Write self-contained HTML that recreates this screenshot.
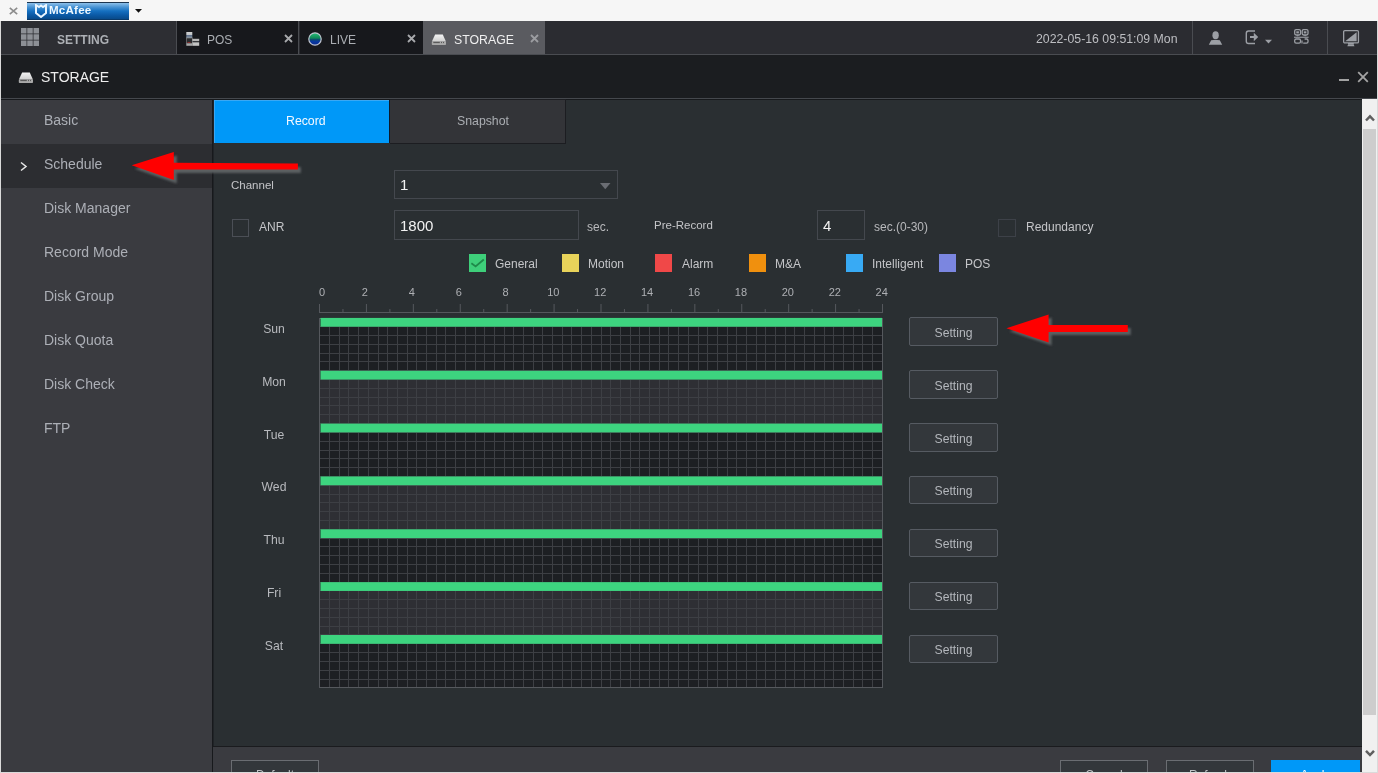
<!DOCTYPE html>
<html><head><meta charset="utf-8">
<style>
*{margin:0;padding:0;box-sizing:border-box}
html,body{width:1378px;height:773px;overflow:hidden;background:#f6f6f6;font-family:"Liberation Sans",sans-serif}
.a{position:absolute}
.t{position:absolute;white-space:nowrap;line-height:1;will-change:transform}
</style></head><body>
<!-- top strip -->
<div class="a" style="left:0;top:0;width:1378px;height:21px;background:#f6f6f6"></div>
<svg class="a" style="left:9px;top:7px" width="9" height="8"><path d="M0.8 0.8L8.2 7.2M8.2 0.8L0.8 7.2" stroke="#8c8c8c" stroke-width="1.6"/></svg>
<div class="a" style="left:27px;top:2px;width:102px;height:18px;background:linear-gradient(#8cc0ea 0%,#4a94d4 25%,#1570c0 50%,#0b5aa6 75%,#084a8a 100%);border-top:1px solid #1c3550;border-bottom:1px solid #0a3a6a"></div>
<div class="t" style="left:49px;top:4.2px;font-size:11.6px;font-weight:bold;letter-spacing:0.2px;color:#eef8ff">McAfee</div>
<svg class="a" style="left:35px;top:4px" width="12" height="14" viewBox="0 0 12 14"><path d="M1 1 L4 3 L6 1.5 L8 3 L11 1 L11 9 L6 13 L1 9Z" fill="none" stroke="#eaf6ff" stroke-width="2"/></svg>
<svg class="a" style="left:134.5px;top:9px" width="8" height="5"><path d="M0 0H7L3.5 3.8Z" fill="#111"/></svg>

<!-- tab bar -->
<div class="a" style="left:0;top:21px;width:1378px;height:34px;background:#2b2c31;border-bottom:1px solid #4a4c51"></div>
<div class="a" style="left:0;top:21px;width:1px;height:752px;background:#dadada"></div>
<div class="a" style="left:1377px;top:21px;width:1px;height:752px;background:#dadada"></div>
<div class="a" style="left:1px;top:21px;width:176px;height:33px;background:#2d2e33;border-right:1px solid #4a4c51"></div>
<svg class="a" style="left:21px;top:28.2px" width="18" height="18"><g fill="#8d9096"><rect x="0.00" y="0.00" width="5.5" height="5.5"/><rect x="6.25" y="0.00" width="5.5" height="5.5"/><rect x="12.50" y="0.00" width="5.5" height="5.5"/><rect x="0.00" y="6.25" width="5.5" height="5.5"/><rect x="6.25" y="6.25" width="5.5" height="5.5"/><rect x="12.50" y="6.25" width="5.5" height="5.5"/><rect x="0.00" y="12.50" width="5.5" height="5.5"/><rect x="6.25" y="12.50" width="5.5" height="5.5"/><rect x="12.50" y="12.50" width="5.5" height="5.5"/></g></svg>
<div class="t" style="left:57px;top:33.5px;font-size:12px;font-weight:bold;color:#adb0b5">SETTING</div>

<div class="a" style="left:177px;top:21px;width:122px;height:33px;background:#17181c;border-right:1px solid #4a4c51"></div>
<svg class="a" style="left:186px;top:32px" width="14" height="14"><defs><linearGradient id="pg" x1="0" y1="0" x2="0" y2="1"><stop offset="0" stop-color="#d0d0d0"/><stop offset="0.45" stop-color="#c0c4c8"/><stop offset="0.55" stop-color="#60708a"/><stop offset="1" stop-color="#8898a8"/></linearGradient></defs><rect x="0.3" y="0" width="6" height="6" fill="url(#pg)"/><rect x="0.3" y="6" width="6" height="5.5" fill="#2a2b2e" stroke="#8a8a8a" stroke-width="0.6"/><rect x="1.5" y="10" width="3" height="0.8" fill="#a03030"/><rect x="0.3" y="11.5" width="6" height="2.3" fill="#a8a8a8"/><rect x="6.3" y="6.8" width="6.9" height="2.4" fill="#b8b8b8"/><rect x="6.3" y="10.3" width="6.9" height="3.5" fill="#c4c4c4"/></svg>
<div class="t" style="left:207px;top:34px;font-size:12px;color:#abaeb3">POS</div>
<svg class="a" style="left:283.6px;top:34px" width="9" height="9"><path d="M1 1L8 8M8 1L1 8" stroke="#a8a9ac" stroke-width="1.8"/></svg>

<div class="a" style="left:300px;top:21px;width:123px;height:33px;background:#17181c"></div>
<svg class="a" style="left:308px;top:32px" width="14" height="14"><defs><linearGradient id="gl" x1="0" y1="0" x2="0" y2="1"><stop offset="0" stop-color="#28c078"/><stop offset="0.42" stop-color="#108a58"/><stop offset="0.55" stop-color="#0a4a70"/><stop offset="0.7" stop-color="#0838a0"/><stop offset="1" stop-color="#0a2a90"/></linearGradient></defs><circle cx="7" cy="7" r="6.2" fill="url(#gl)" stroke="#c0c4d0" stroke-width="1.2"/></svg>
<div class="t" style="left:330px;top:34px;font-size:12px;color:#abaeb3">LIVE</div>
<svg class="a" style="left:407px;top:34px" width="9" height="9"><path d="M1 1L8 8M8 1L1 8" stroke="#a8a9ac" stroke-width="1.8"/></svg>

<div class="a" style="left:423px;top:21px;width:122px;height:33px;background:#5a5b60"></div>
<svg class="a" style="left:431px;top:33.5px" width="16" height="12"><defs><linearGradient id="dg1" x1="0" y1="0" x2="0" y2="1"><stop offset="0" stop-color="#f4f4f4"/><stop offset="1" stop-color="#cfcfcf"/></linearGradient></defs><path d="M4.1 0.4H11.8L14.9 7.4H0.9Z" fill="url(#dg1)"/><rect x="0.8" y="7.2" width="14.2" height="3.8" rx="0.8" fill="#a9a9a9"/><rect x="2.3" y="7.9" width="6.5" height="1.2" fill="#5a5a5a"/><rect x="10" y="7.9" width="1" height="1.2" fill="#5a5a5a"/><rect x="12" y="7.9" width="1" height="1.2" fill="#5a5a5a"/></svg>
<div class="t" style="left:454px;top:34px;font-size:12.3px;color:#f0f0f0">STORAGE</div>
<svg class="a" style="left:530.2px;top:34px" width="9" height="9"><path d="M1 1L8 8M8 1L1 8" stroke="#9c9da1" stroke-width="1.8"/></svg>

<div class="t" style="left:1036px;top:33px;font-size:12.3px;color:#bdbec2">2022-05-16 09:51:09 Mon</div>
<div class="a" style="left:1192px;top:21px;width:1px;height:33px;background:#4a4c51"></div>
<div class="a" style="left:1327px;top:21px;width:1px;height:33px;background:#4a4c51"></div>
<svg class="a" style="left:1208px;top:31px" width="15" height="14"><ellipse cx="7.6" cy="4.2" rx="3.2" ry="3.9" fill="#9c9fa5"/><path d="M0.8 13.8 L3.2 9.2 Q7.5 8.2 11.8 9.2 L14.2 13.8Z" fill="#9c9fa5"/></svg>
<svg class="a" style="left:1245px;top:30px" width="28" height="15"><path d="M10 1H3.5Q1.3 1 1.3 3.2V11.3Q1.3 13.5 3.5 13.5H10" fill="none" stroke="#9c9fa5" stroke-width="1.4"/><path d="M5 5.9H8.8V2.8L13.2 7L8.8 11.2V8.1H5Z" fill="#9c9fa5"/><path d="M20 9.8H27L23.5 13.6Z" fill="#9c9fa5"/></svg>
<svg class="a" style="left:1294px;top:29px" width="15" height="15"><g fill="none" stroke="#9c9fa5" stroke-width="1.3"><rect x="0.7" y="0.7" width="5.8" height="5.3" rx="1.4"/><rect x="8.2" y="0.7" width="5.8" height="5.3" rx="1.4"/><rect x="0.7" y="10" width="5.8" height="4.2" rx="1.4"/><path d="M9.2 14.2H12.6Q14 14.2 14 12.8V11.4Q14 10 12.6 10H10.6"/></g><g fill="#9c9fa5"><rect x="2.3" y="2.3" width="2.6" height="2.1"/><rect x="9.8" y="2.3" width="2.6" height="2.1"/><path d="M2.5 6.2L3.6 7.4L4.7 6.2Z"/><path d="M10 6.2L11.1 7.4L12.2 6.2Z"/><rect x="0" y="7.7" width="14.6" height="1.1"/><rect x="7.4" y="11.5" width="1.2" height="3"/></g></svg>
<svg class="a" style="left:1343px;top:29.8px" width="17" height="17"><rect x="0.65" y="0.65" width="14.8" height="12.2" rx="1.2" fill="none" stroke="#9c9fa5" stroke-width="1.3"/><path d="M2.2 11.3L13.6 2.2V11.3Z" fill="#9c9fa5"/><rect x="5" y="13" width="5.8" height="1.6" fill="#9c9fa5"/><path d="M4.3 16.3L5.1 14.4H10.7L11.5 16.3Z" fill="#9c9fa5"/></svg>

<!-- header -->
<div class="a" style="left:1px;top:55px;width:1376px;height:43px;background:#1b1d20"></div><div class="a" style="left:1px;top:98px;width:1376px;height:1px;background:#45484d"></div><div class="a" style="left:1px;top:99px;width:1376px;height:1px;background:#17191c"></div>
<svg class="a" style="left:17.5px;top:71.5px" width="16" height="12"><defs><linearGradient id="dg2" x1="0" y1="0" x2="0" y2="1"><stop offset="0" stop-color="#f4f4f4"/><stop offset="1" stop-color="#cfcfcf"/></linearGradient></defs><path d="M4.1 0.4H11.8L14.9 7.4H0.9Z" fill="url(#dg2)"/><rect x="0.8" y="7.2" width="14.2" height="3.8" rx="0.8" fill="#a9a9a9"/><rect x="2.3" y="7.9" width="6.5" height="1.2" fill="#5a5a5a"/><rect x="10" y="7.9" width="1" height="1.2" fill="#5a5a5a"/><rect x="12" y="7.9" width="1" height="1.2" fill="#5a5a5a"/></svg>
<div class="t" style="left:41px;top:70px;font-size:14px;color:#eeeeee">STORAGE</div>
<div class="a" style="left:1338.5px;top:79px;width:10.5px;height:1.6px;background:#a2a2a2"></div>
<svg class="a" style="left:1356.5px;top:71px" width="12" height="12"><path d="M1.2 1.2L10.8 10.8M10.8 1.2L1.2 10.8" stroke="#a4a4a4" stroke-width="1.8"/></svg>

<!-- sidebar -->
<div class="a" style="left:1px;top:100px;width:212px;height:673px;background:#3a3b40;border-right:1px solid #17191c"></div><div class="a" style="left:213px;top:100px;width:1px;height:646px;background:#202327"></div>
<div class="a" style="left:1px;top:144px;width:211px;height:44px;background:#2c2d31"></div>
<div class="t" style="left:44px;top:113.4px;font-size:14px;color:#acafb6">Basic</div>
<svg class="a" style="left:19px;top:161px" width="10" height="11"><path d="M2 1.5L7 5.5L2 9.5" fill="none" stroke="#e8e8e8" stroke-width="1.5"/></svg>
<div class="t" style="left:44px;top:157.4px;font-size:14px;color:#acafb6">Schedule</div>
<div class="t" style="left:44px;top:201.4px;font-size:14px;color:#acafb6">Disk Manager</div>
<div class="t" style="left:44px;top:245.4px;font-size:14px;color:#acafb6">Record Mode</div>
<div class="t" style="left:44px;top:289.4px;font-size:14px;color:#acafb6">Disk Group</div>
<div class="t" style="left:44px;top:333.4px;font-size:14px;color:#acafb6">Disk Quota</div>
<div class="t" style="left:44px;top:377.4px;font-size:14px;color:#acafb6">Disk Check</div>
<div class="t" style="left:44px;top:421.4px;font-size:14px;color:#acafb6">FTP</div>

<!-- content -->
<div class="a" style="left:214px;top:100px;width:1148px;height:646px;background:#2a2f32"></div>
<div class="a" style="left:214px;top:100px;width:175px;height:43px;background:#0098f8;border-top:1px solid #3aa8f4;border-left:1px solid #3aa8f4"></div><div class="a" style="left:389px;top:100px;width:1px;height:43px;background:#0d1a2a"></div>
<div class="t" style="left:286px;top:114.8px;font-size:12.3px;color:#f4f8ff">Record</div>
<div class="a" style="left:390px;top:99px;width:176px;height:45px;background:#333438;border:1px solid #1c1d21;border-left:none"></div>
<div class="t" style="left:456.5px;top:114.8px;font-size:12.3px;color:#abaeb3">Snapshot</div>


<div class="t" style="left:231px;top:179.5px;font-size:11.5px;color:#c4c5c8">Channel</div>
<div class="a" style="left:394px;top:170px;width:224px;height:29px;border:1px solid #44484e"></div>
<div class="t" style="left:400px;top:177.2px;font-size:15px;color:#f2f2f2">1</div>
<svg class="a" style="left:600px;top:182.5px" width="11" height="7"><path d="M0 0H10.5L5.25 6.3Z" fill="#6a6d73"/></svg>

<div class="a" style="left:232px;top:219px;width:17px;height:18px;border:1px solid #4b4f56"></div>
<div class="t" style="left:259px;top:221px;font-size:12px;color:#c4c5c8">ANR</div>
<div class="a" style="left:394px;top:210px;width:185px;height:30px;border:1px solid #44484e"></div>
<div class="t" style="left:400px;top:218px;font-size:15px;color:#f2f2f2">1800</div>
<div class="t" style="left:587px;top:221px;font-size:12px;color:#b8b9bc">sec.</div>
<div class="t" style="left:654px;top:220px;font-size:11.5px;color:#c4c5c8">Pre-Record</div>
<div class="a" style="left:817px;top:210px;width:48px;height:30px;border:1px solid #44484e"></div>
<div class="t" style="left:823px;top:218px;font-size:15px;color:#f2f2f2">4</div>
<div class="t" style="left:874px;top:221px;font-size:12px;color:#b8b9bc">sec.(0-30)</div>
<div class="a" style="left:998px;top:219px;width:18px;height:18px;border:1px solid #3d4148"></div>
<div class="t" style="left:1026px;top:221px;font-size:12px;color:#c4c5c8">Redundancy</div>
<div class="a" style="left:469px;top:254px;width:17px;height:18px;background:#3ecf7a"></div>
<div class="t" style="left:495px;top:257.6px;font-size:12px;color:#c4c5c8">General</div>
<div class="a" style="left:562px;top:254px;width:17px;height:18px;background:#e8d35a"></div>
<div class="t" style="left:588px;top:257.6px;font-size:12px;color:#c4c5c8">Motion</div>
<div class="a" style="left:655px;top:254px;width:17px;height:18px;background:#f04848"></div>
<div class="t" style="left:682px;top:257.6px;font-size:12px;color:#c4c5c8">Alarm</div>
<div class="a" style="left:749px;top:254px;width:17px;height:18px;background:#f0900e"></div>
<div class="t" style="left:775px;top:257.6px;font-size:12px;color:#c4c5c8">M&amp;A</div>
<div class="a" style="left:846px;top:254px;width:17px;height:18px;background:#38aaf4"></div>
<div class="t" style="left:872px;top:257.6px;font-size:12px;color:#c4c5c8">Intelligent</div>
<div class="a" style="left:939px;top:254px;width:17px;height:18px;background:#7b86e0"></div>
<div class="t" style="left:965px;top:257.6px;font-size:12px;color:#c4c5c8">POS</div>
<svg class="a" style="left:469px;top:254px" width="17" height="18"><path d="M2.4 9.3L6.6 12.4L14.8 5.6" fill="none" stroke="#1f8a4a" stroke-width="1.9"/></svg>

<svg class="a" style="left:300px;top:280px;will-change:transform" width="600" height="420" viewBox="0 0 600 420">
<rect x="19.00" y="24" width="1" height="9" fill="#55585d"/>
<rect x="42.46" y="29" width="1" height="4" fill="#55585d"/>
<rect x="65.92" y="24" width="1" height="9" fill="#55585d"/>
<rect x="89.38" y="29" width="1" height="4" fill="#55585d"/>
<rect x="112.83" y="24" width="1" height="9" fill="#55585d"/>
<rect x="136.29" y="29" width="1" height="4" fill="#55585d"/>
<rect x="159.75" y="24" width="1" height="9" fill="#55585d"/>
<rect x="183.21" y="29" width="1" height="4" fill="#55585d"/>
<rect x="206.67" y="24" width="1" height="9" fill="#55585d"/>
<rect x="230.12" y="29" width="1" height="4" fill="#55585d"/>
<rect x="253.58" y="24" width="1" height="9" fill="#55585d"/>
<rect x="277.04" y="29" width="1" height="4" fill="#55585d"/>
<rect x="300.50" y="24" width="1" height="9" fill="#55585d"/>
<rect x="323.96" y="29" width="1" height="4" fill="#55585d"/>
<rect x="347.42" y="24" width="1" height="9" fill="#55585d"/>
<rect x="370.88" y="29" width="1" height="4" fill="#55585d"/>
<rect x="394.33" y="24" width="1" height="9" fill="#55585d"/>
<rect x="417.79" y="29" width="1" height="4" fill="#55585d"/>
<rect x="441.25" y="24" width="1" height="9" fill="#55585d"/>
<rect x="464.71" y="29" width="1" height="4" fill="#55585d"/>
<rect x="488.17" y="24" width="1" height="9" fill="#55585d"/>
<rect x="511.62" y="29" width="1" height="4" fill="#55585d"/>
<rect x="535.08" y="24" width="1" height="9" fill="#55585d"/>
<rect x="558.54" y="29" width="1" height="4" fill="#55585d"/>
<rect x="582.00" y="24" width="1" height="9" fill="#55585d"/>
<rect x="19.00" y="32" width="564.00" height="1" fill="#55585d"/>
<text x="22.00" y="16" text-anchor="middle" font-family="Liberation Sans" font-size="11" fill="#aeb0b4">0</text>
<text x="64.92" y="16" text-anchor="middle" font-family="Liberation Sans" font-size="11" fill="#aeb0b4">2</text>
<text x="111.83" y="16" text-anchor="middle" font-family="Liberation Sans" font-size="11" fill="#aeb0b4">4</text>
<text x="158.75" y="16" text-anchor="middle" font-family="Liberation Sans" font-size="11" fill="#aeb0b4">6</text>
<text x="205.67" y="16" text-anchor="middle" font-family="Liberation Sans" font-size="11" fill="#aeb0b4">8</text>
<text x="253.28" y="16" text-anchor="middle" font-family="Liberation Sans" font-size="11" fill="#aeb0b4">10</text>
<text x="300.20" y="16" text-anchor="middle" font-family="Liberation Sans" font-size="11" fill="#aeb0b4">12</text>
<text x="347.12" y="16" text-anchor="middle" font-family="Liberation Sans" font-size="11" fill="#aeb0b4">14</text>
<text x="394.03" y="16" text-anchor="middle" font-family="Liberation Sans" font-size="11" fill="#aeb0b4">16</text>
<text x="440.95" y="16" text-anchor="middle" font-family="Liberation Sans" font-size="11" fill="#aeb0b4">18</text>
<text x="487.87" y="16" text-anchor="middle" font-family="Liberation Sans" font-size="11" fill="#aeb0b4">20</text>
<text x="534.78" y="16" text-anchor="middle" font-family="Liberation Sans" font-size="11" fill="#aeb0b4">22</text>
<text x="581.70" y="16" text-anchor="middle" font-family="Liberation Sans" font-size="11" fill="#aeb0b4">24</text>
<rect x="19.50" y="37.90" width="563.00" height="52.85" fill="#1d1f23"/>
<rect x="19.50" y="90.75" width="563.00" height="52.85" fill="#2e2f34"/>
<rect x="19.50" y="143.60" width="563.00" height="52.85" fill="#1d1f23"/>
<rect x="19.50" y="196.45" width="563.00" height="52.85" fill="#2e2f34"/>
<rect x="19.50" y="249.30" width="563.00" height="52.85" fill="#1d1f23"/>
<rect x="19.50" y="302.15" width="563.00" height="52.85" fill="#2e2f34"/>
<rect x="19.50" y="355.00" width="563.00" height="52.85" fill="#1d1f23"/>
<rect x="29" y="37.90" width="1" height="369.95" fill="#3d3f44" shape-rendering="crispEdges"/>
<rect x="39" y="37.90" width="1" height="369.95" fill="#3d3f44" shape-rendering="crispEdges"/>
<rect x="48" y="37.90" width="1" height="369.95" fill="#3d3f44" shape-rendering="crispEdges"/>
<rect x="58" y="37.90" width="1" height="369.95" fill="#3d3f44" shape-rendering="crispEdges"/>
<rect x="68" y="37.90" width="1" height="369.95" fill="#3d3f44" shape-rendering="crispEdges"/>
<rect x="78" y="37.90" width="1" height="369.95" fill="#3d3f44" shape-rendering="crispEdges"/>
<rect x="87" y="37.90" width="1" height="369.95" fill="#3d3f44" shape-rendering="crispEdges"/>
<rect x="97" y="37.90" width="1" height="369.95" fill="#3d3f44" shape-rendering="crispEdges"/>
<rect x="107" y="37.90" width="1" height="369.95" fill="#3d3f44" shape-rendering="crispEdges"/>
<rect x="116" y="37.90" width="1" height="369.95" fill="#3d3f44" shape-rendering="crispEdges"/>
<rect x="126" y="37.90" width="1" height="369.95" fill="#3d3f44" shape-rendering="crispEdges"/>
<rect x="136" y="37.90" width="1" height="369.95" fill="#3d3f44" shape-rendering="crispEdges"/>
<rect x="145" y="37.90" width="1" height="369.95" fill="#3d3f44" shape-rendering="crispEdges"/>
<rect x="155" y="37.90" width="1" height="369.95" fill="#3d3f44" shape-rendering="crispEdges"/>
<rect x="165" y="37.90" width="1" height="369.95" fill="#3d3f44" shape-rendering="crispEdges"/>
<rect x="175" y="37.90" width="1" height="369.95" fill="#3d3f44" shape-rendering="crispEdges"/>
<rect x="184" y="37.90" width="1" height="369.95" fill="#3d3f44" shape-rendering="crispEdges"/>
<rect x="194" y="37.90" width="1" height="369.95" fill="#3d3f44" shape-rendering="crispEdges"/>
<rect x="204" y="37.90" width="1" height="369.95" fill="#3d3f44" shape-rendering="crispEdges"/>
<rect x="213" y="37.90" width="1" height="369.95" fill="#3d3f44" shape-rendering="crispEdges"/>
<rect x="223" y="37.90" width="1" height="369.95" fill="#3d3f44" shape-rendering="crispEdges"/>
<rect x="233" y="37.90" width="1" height="369.95" fill="#3d3f44" shape-rendering="crispEdges"/>
<rect x="242" y="37.90" width="1" height="369.95" fill="#3d3f44" shape-rendering="crispEdges"/>
<rect x="252" y="37.90" width="1" height="369.95" fill="#3d3f44" shape-rendering="crispEdges"/>
<rect x="262" y="37.90" width="1" height="369.95" fill="#3d3f44" shape-rendering="crispEdges"/>
<rect x="271" y="37.90" width="1" height="369.95" fill="#3d3f44" shape-rendering="crispEdges"/>
<rect x="281" y="37.90" width="1" height="369.95" fill="#3d3f44" shape-rendering="crispEdges"/>
<rect x="291" y="37.90" width="1" height="369.95" fill="#3d3f44" shape-rendering="crispEdges"/>
<rect x="301" y="37.90" width="1" height="369.95" fill="#3d3f44" shape-rendering="crispEdges"/>
<rect x="310" y="37.90" width="1" height="369.95" fill="#3d3f44" shape-rendering="crispEdges"/>
<rect x="320" y="37.90" width="1" height="369.95" fill="#3d3f44" shape-rendering="crispEdges"/>
<rect x="330" y="37.90" width="1" height="369.95" fill="#3d3f44" shape-rendering="crispEdges"/>
<rect x="339" y="37.90" width="1" height="369.95" fill="#3d3f44" shape-rendering="crispEdges"/>
<rect x="349" y="37.90" width="1" height="369.95" fill="#3d3f44" shape-rendering="crispEdges"/>
<rect x="359" y="37.90" width="1" height="369.95" fill="#3d3f44" shape-rendering="crispEdges"/>
<rect x="368" y="37.90" width="1" height="369.95" fill="#3d3f44" shape-rendering="crispEdges"/>
<rect x="378" y="37.90" width="1" height="369.95" fill="#3d3f44" shape-rendering="crispEdges"/>
<rect x="388" y="37.90" width="1" height="369.95" fill="#3d3f44" shape-rendering="crispEdges"/>
<rect x="398" y="37.90" width="1" height="369.95" fill="#3d3f44" shape-rendering="crispEdges"/>
<rect x="407" y="37.90" width="1" height="369.95" fill="#3d3f44" shape-rendering="crispEdges"/>
<rect x="417" y="37.90" width="1" height="369.95" fill="#3d3f44" shape-rendering="crispEdges"/>
<rect x="427" y="37.90" width="1" height="369.95" fill="#3d3f44" shape-rendering="crispEdges"/>
<rect x="436" y="37.90" width="1" height="369.95" fill="#3d3f44" shape-rendering="crispEdges"/>
<rect x="446" y="37.90" width="1" height="369.95" fill="#3d3f44" shape-rendering="crispEdges"/>
<rect x="456" y="37.90" width="1" height="369.95" fill="#3d3f44" shape-rendering="crispEdges"/>
<rect x="465" y="37.90" width="1" height="369.95" fill="#3d3f44" shape-rendering="crispEdges"/>
<rect x="475" y="37.90" width="1" height="369.95" fill="#3d3f44" shape-rendering="crispEdges"/>
<rect x="485" y="37.90" width="1" height="369.95" fill="#3d3f44" shape-rendering="crispEdges"/>
<rect x="494" y="37.90" width="1" height="369.95" fill="#3d3f44" shape-rendering="crispEdges"/>
<rect x="504" y="37.90" width="1" height="369.95" fill="#3d3f44" shape-rendering="crispEdges"/>
<rect x="514" y="37.90" width="1" height="369.95" fill="#3d3f44" shape-rendering="crispEdges"/>
<rect x="524" y="37.90" width="1" height="369.95" fill="#3d3f44" shape-rendering="crispEdges"/>
<rect x="533" y="37.90" width="1" height="369.95" fill="#3d3f44" shape-rendering="crispEdges"/>
<rect x="543" y="37.90" width="1" height="369.95" fill="#3d3f44" shape-rendering="crispEdges"/>
<rect x="553" y="37.90" width="1" height="369.95" fill="#3d3f44" shape-rendering="crispEdges"/>
<rect x="562" y="37.90" width="1" height="369.95" fill="#3d3f44" shape-rendering="crispEdges"/>
<rect x="572" y="37.90" width="1" height="369.95" fill="#3d3f44" shape-rendering="crispEdges"/>
<rect x="19.50" y="46" width="563.00" height="1" fill="#3d3f44" shape-rendering="crispEdges"/>
<rect x="19.50" y="55" width="563.00" height="1" fill="#3d3f44" shape-rendering="crispEdges"/>
<rect x="19.50" y="64" width="563.00" height="1" fill="#3d3f44" shape-rendering="crispEdges"/>
<rect x="19.50" y="73" width="563.00" height="1" fill="#3d3f44" shape-rendering="crispEdges"/>
<rect x="19.50" y="81" width="563.00" height="1" fill="#3d3f44" shape-rendering="crispEdges"/>
<rect x="19.50" y="90" width="563.00" height="1" fill="#3d3f44" shape-rendering="crispEdges"/>
<rect x="19.50" y="99" width="563.00" height="1" fill="#3d3f44" shape-rendering="crispEdges"/>
<rect x="19.50" y="108" width="563.00" height="1" fill="#3d3f44" shape-rendering="crispEdges"/>
<rect x="19.50" y="117" width="563.00" height="1" fill="#3d3f44" shape-rendering="crispEdges"/>
<rect x="19.50" y="125" width="563.00" height="1" fill="#3d3f44" shape-rendering="crispEdges"/>
<rect x="19.50" y="134" width="563.00" height="1" fill="#3d3f44" shape-rendering="crispEdges"/>
<rect x="19.50" y="143" width="563.00" height="1" fill="#3d3f44" shape-rendering="crispEdges"/>
<rect x="19.50" y="152" width="563.00" height="1" fill="#3d3f44" shape-rendering="crispEdges"/>
<rect x="19.50" y="161" width="563.00" height="1" fill="#3d3f44" shape-rendering="crispEdges"/>
<rect x="19.50" y="170" width="563.00" height="1" fill="#3d3f44" shape-rendering="crispEdges"/>
<rect x="19.50" y="178" width="563.00" height="1" fill="#3d3f44" shape-rendering="crispEdges"/>
<rect x="19.50" y="187" width="563.00" height="1" fill="#3d3f44" shape-rendering="crispEdges"/>
<rect x="19.50" y="196" width="563.00" height="1" fill="#3d3f44" shape-rendering="crispEdges"/>
<rect x="19.50" y="205" width="563.00" height="1" fill="#3d3f44" shape-rendering="crispEdges"/>
<rect x="19.50" y="214" width="563.00" height="1" fill="#3d3f44" shape-rendering="crispEdges"/>
<rect x="19.50" y="222" width="563.00" height="1" fill="#3d3f44" shape-rendering="crispEdges"/>
<rect x="19.50" y="231" width="563.00" height="1" fill="#3d3f44" shape-rendering="crispEdges"/>
<rect x="19.50" y="240" width="563.00" height="1" fill="#3d3f44" shape-rendering="crispEdges"/>
<rect x="19.50" y="249" width="563.00" height="1" fill="#3d3f44" shape-rendering="crispEdges"/>
<rect x="19.50" y="258" width="563.00" height="1" fill="#3d3f44" shape-rendering="crispEdges"/>
<rect x="19.50" y="266" width="563.00" height="1" fill="#3d3f44" shape-rendering="crispEdges"/>
<rect x="19.50" y="275" width="563.00" height="1" fill="#3d3f44" shape-rendering="crispEdges"/>
<rect x="19.50" y="284" width="563.00" height="1" fill="#3d3f44" shape-rendering="crispEdges"/>
<rect x="19.50" y="293" width="563.00" height="1" fill="#3d3f44" shape-rendering="crispEdges"/>
<rect x="19.50" y="302" width="563.00" height="1" fill="#3d3f44" shape-rendering="crispEdges"/>
<rect x="19.50" y="310" width="563.00" height="1" fill="#3d3f44" shape-rendering="crispEdges"/>
<rect x="19.50" y="319" width="563.00" height="1" fill="#3d3f44" shape-rendering="crispEdges"/>
<rect x="19.50" y="328" width="563.00" height="1" fill="#3d3f44" shape-rendering="crispEdges"/>
<rect x="19.50" y="337" width="563.00" height="1" fill="#3d3f44" shape-rendering="crispEdges"/>
<rect x="19.50" y="346" width="563.00" height="1" fill="#3d3f44" shape-rendering="crispEdges"/>
<rect x="19.50" y="354" width="563.00" height="1" fill="#3d3f44" shape-rendering="crispEdges"/>
<rect x="19.50" y="363" width="563.00" height="1" fill="#3d3f44" shape-rendering="crispEdges"/>
<rect x="19.50" y="372" width="563.00" height="1" fill="#3d3f44" shape-rendering="crispEdges"/>
<rect x="19.50" y="381" width="563.00" height="1" fill="#3d3f44" shape-rendering="crispEdges"/>
<rect x="19.50" y="390" width="563.00" height="1" fill="#3d3f44" shape-rendering="crispEdges"/>
<rect x="19.50" y="399" width="563.00" height="1" fill="#3d3f44" shape-rendering="crispEdges"/>
<rect x="19" y="38" width="563" height="369" fill="none" stroke="#55585d" stroke-width="1" transform="translate(0.5,0.5)"/>
<rect x="20.50" y="37.90" width="561.50" height="8.81" fill="#3dd47f"/>
<rect x="20.50" y="90.75" width="561.50" height="8.81" fill="#3dd47f"/>
<rect x="20.50" y="143.60" width="561.50" height="8.81" fill="#3dd47f"/>
<rect x="20.50" y="196.45" width="561.50" height="8.81" fill="#3dd47f"/>
<rect x="20.50" y="249.30" width="561.50" height="8.81" fill="#3dd47f"/>
<rect x="20.50" y="302.15" width="561.50" height="8.81" fill="#3dd47f"/>
<rect x="20.50" y="355.00" width="561.50" height="8.81" fill="#3dd47f"/>
</svg>
<div class="t" style="left:244px;width:60px;text-align:center;top:322.9px;font-size:12.2px;color:#b8babe">Sun</div>
<div class="a" style="left:909px;top:317.4px;width:89px;height:28.5px;background:#33373b;border:1px solid #565b62;border-radius:2px"></div>
<div class="t" style="left:909px;width:89px;text-align:center;top:326.9px;font-size:12.2px;color:#b4b7bc">Setting</div>
<div class="t" style="left:244px;width:60px;text-align:center;top:375.8px;font-size:12.2px;color:#b8babe">Mon</div>
<div class="a" style="left:909px;top:370.2px;width:89px;height:28.5px;background:#33373b;border:1px solid #565b62;border-radius:2px"></div>
<div class="t" style="left:909px;width:89px;text-align:center;top:379.8px;font-size:12.2px;color:#b4b7bc">Setting</div>
<div class="t" style="left:244px;width:60px;text-align:center;top:428.6px;font-size:12.2px;color:#b8babe">Tue</div>
<div class="a" style="left:909px;top:423.1px;width:89px;height:28.5px;background:#33373b;border:1px solid #565b62;border-radius:2px"></div>
<div class="t" style="left:909px;width:89px;text-align:center;top:432.6px;font-size:12.2px;color:#b4b7bc">Setting</div>
<div class="t" style="left:244px;width:60px;text-align:center;top:481.4px;font-size:12.2px;color:#b8babe">Wed</div>
<div class="a" style="left:909px;top:475.9px;width:89px;height:28.5px;background:#33373b;border:1px solid #565b62;border-radius:2px"></div>
<div class="t" style="left:909px;width:89px;text-align:center;top:485.4px;font-size:12.2px;color:#b4b7bc">Setting</div>
<div class="t" style="left:244px;width:60px;text-align:center;top:534.3px;font-size:12.2px;color:#b8babe">Thu</div>
<div class="a" style="left:909px;top:528.8px;width:89px;height:28.5px;background:#33373b;border:1px solid #565b62;border-radius:2px"></div>
<div class="t" style="left:909px;width:89px;text-align:center;top:538.3px;font-size:12.2px;color:#b4b7bc">Setting</div>
<div class="t" style="left:244px;width:60px;text-align:center;top:587.1px;font-size:12.2px;color:#b8babe">Fri</div>
<div class="a" style="left:909px;top:581.6px;width:89px;height:28.5px;background:#33373b;border:1px solid #565b62;border-radius:2px"></div>
<div class="t" style="left:909px;width:89px;text-align:center;top:591.1px;font-size:12.2px;color:#b4b7bc">Setting</div>
<div class="t" style="left:244px;width:60px;text-align:center;top:640.0px;font-size:12.2px;color:#b8babe">Sat</div>
<div class="a" style="left:909px;top:634.5px;width:89px;height:28.5px;background:#33373b;border:1px solid #565b62;border-radius:2px"></div>
<div class="t" style="left:909px;width:89px;text-align:center;top:644.0px;font-size:12.2px;color:#b4b7bc">Setting</div>
<svg class="a" style="left:120px;top:140px" width="200" height="50"><defs><filter id="sh" x="-20%" y="-50%" width="140%" height="200%"><feGaussianBlur stdDeviation="1.2"/></filter></defs>
<path d="M11.7 25.2 L53.8 12.1 L53.8 22.7 L177.9 23.4 L177.9 29.6 L53.8 29.6 L53.8 40 Z" fill="#5c6062" transform="translate(3,3.5)" filter="url(#sh)"/>
<path d="M11.7 25.2 L53.8 12.1 L53.8 22.7 L177.9 23.4 L177.9 29.6 L53.8 29.6 L53.8 40 Z" fill="#ff0000"/></svg>
<svg class="a" style="left:995px;top:305px" width="150" height="45">
<path d="M11.4 23.2 L53.6 9.6 L53.6 19.9 L132.8 19.9 L132.8 26.9 L53.6 26.9 L53.6 37.6 Z" fill="#5c6062" transform="translate(3,3)" filter="url(#sh)"/>
<path d="M11.4 23.2 L53.6 9.6 L53.6 19.9 L132.8 19.9 L132.8 26.9 L53.6 26.9 L53.6 37.6 Z" fill="#ff0000"/></svg>


<!-- bottom bar -->
<div class="a" style="left:213px;top:746px;width:1149px;height:27px;background:#3a3b40;border-top:1px solid #1a1b1e"></div>
<div class="a" style="left:231px;top:760px;width:88px;height:20px;background:#33373b;border:1px solid #6a6d72"></div><div class="t" style="left:231px;width:88px;text-align:center;top:768.6px;font-size:12px;color:#c0c2c5">Default</div>
<div class="a" style="left:1060px;top:760px;width:88px;height:20px;background:#33373b;border:1px solid #6a6d72"></div><div class="t" style="left:1060px;width:88px;text-align:center;top:768.6px;font-size:12px;color:#c0c2c5">Cancel</div>
<div class="a" style="left:1166px;top:760px;width:88px;height:20px;background:#33373b;border:1px solid #6a6d72"></div><div class="t" style="left:1166px;width:88px;text-align:center;top:768.6px;font-size:12px;color:#c0c2c5">Refresh</div>
<div class="a" style="left:1271px;top:760px;width:89px;height:20px;background:#0098f8"></div><div class="t" style="left:1271px;width:89px;text-align:center;top:768.6px;font-size:12px;color:#ffffff">Apply</div>
<div class="a" style="left:0;top:772px;width:1378px;height:1px;background:#dadada"></div>

<!-- scrollbar -->
<div class="a" style="left:1362px;top:99px;width:15px;height:673px;background:#f0f0f0"></div>
<div class="a" style="left:1363px;top:129px;width:13px;height:586px;background:#cdcdcd"></div>
<svg class="a" style="left:1365px;top:112.8px" width="11" height="10"><path d="M1 7.5L5 3.3L9 7.5" fill="none" stroke="#5f5f5f" stroke-width="2.5"/></svg>
<svg class="a" style="left:1365px;top:748.5px" width="11" height="10"><path d="M1 1.8L5 6L9 1.8" fill="none" stroke="#5f5f5f" stroke-width="2.5"/></svg>
</body></html>
